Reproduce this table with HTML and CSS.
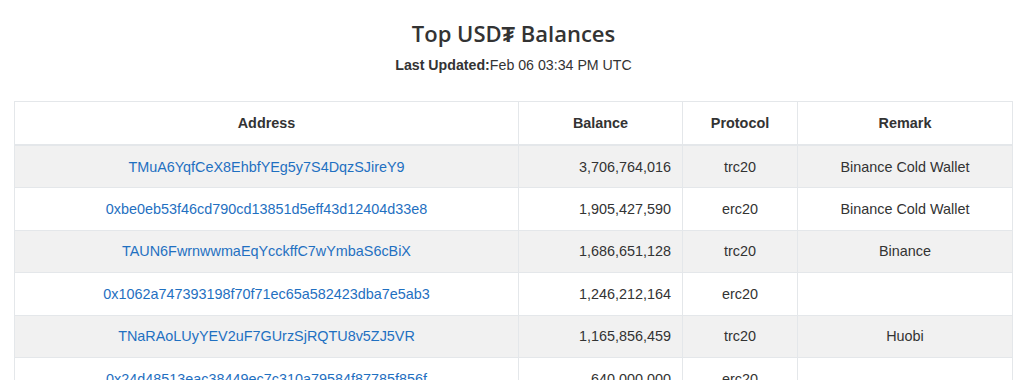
FILE: index.html
```html
<!DOCTYPE html>
<html>
<head>
<meta charset="utf-8">
<link rel="stylesheet" href="styles.css">
</head>
<body>
<main class="page">
  <h1 class="title">Top USD₮ Balances</h1>
  <p class="updated"><b>Last Updated:</b>Feb 06 03:34 PM UTC</p>
  <table class="balances">
    <colgroup>
      <col class="c-addr">
      <col class="c-bal">
      <col class="c-proto">
      <col class="c-rem">
    </colgroup>
    <thead>
      <tr>
        <th>Address</th>
        <th>Balance</th>
        <th>Protocol</th>
        <th>Remark</th>
      </tr>
    </thead>
    <tbody>
      <tr><td><a href="#">TMuA6YqfCeX8EhbfYEg5y7S4DqzSJireY9</a></td><td class="num">3,706,764,016</td><td>trc20</td><td>Binance Cold Wallet</td></tr>
      <tr><td><a href="#">0xbe0eb53f46cd790cd13851d5eff43d12404d33e8</a></td><td class="num">1,905,427,590</td><td>erc20</td><td>Binance Cold Wallet</td></tr>
      <tr><td><a href="#">TAUN6FwrnwwmaEqYcckffC7wYmbaS6cBiX</a></td><td class="num">1,686,651,128</td><td>trc20</td><td>Binance</td></tr>
      <tr><td><a href="#">0x1062a747393198f70f71ec65a582423dba7e5ab3</a></td><td class="num">1,246,212,164</td><td>erc20</td><td></td></tr>
      <tr><td><a href="#">TNaRAoLUyYEV2uF7GUrzSjRQTU8v5ZJ5VR</a></td><td class="num">1,165,856,459</td><td>trc20</td><td>Huobi</td></tr>
      <tr><td><a href="#">0x24d48513eac38449ec7c310a79584f87785f856f</a></td><td class="num">640,000,000</td><td>erc20</td><td></td></tr>
    </tbody>
  </table>
</main>
</body>
</html>
```
FILE: styles.css
```css
html, body {
  margin: 0;
  padding: 0;
  background: #fff;
}
body {
  font-family: "Liberation Sans", Arial, sans-serif;
  font-size: 14px;
  color: #333;
}
.page {
  padding: 0 11px 0 14px;
}
.title {
  margin: 0;
  padding-top: 19px;
  font-family: "Open Sans", sans-serif;
  font-weight: 600;
  font-size: 22px;
  line-height: 28px;
  text-align: center;
  color: #333;
}
.updated {
  margin: 9px 0 0;
  font-size: 14.2px;
  line-height: 18px;
  text-align: center;
  color: #333;
}
.balances {
  margin-top: 27px;
  width: 100%;
  table-layout: fixed;
  border-collapse: collapse;
  border: 1px solid #e4e7ea;
}
.c-addr { width: 504px; }
.c-bal { width: 164px; }
.c-proto { width: 115px; }
.balances th,
.balances td {
  border: 1px solid #e4e7ea;
  padding: 10.7px 11px;
  line-height: 20px;
  text-align: center;
  font-size: 14.4px;
  white-space: nowrap;
}
.balances th {
  font-weight: bold;
  border-bottom: 2px solid #e4e7ea;
  padding-top: 11px;
  padding-bottom: 11px;
}
.balances td.num { text-align: right; }
.balances tbody tr:nth-child(odd) { background: #f1f1f1; }
.balances a {
  color: #1f70c1;
  text-decoration: none;
}
```
